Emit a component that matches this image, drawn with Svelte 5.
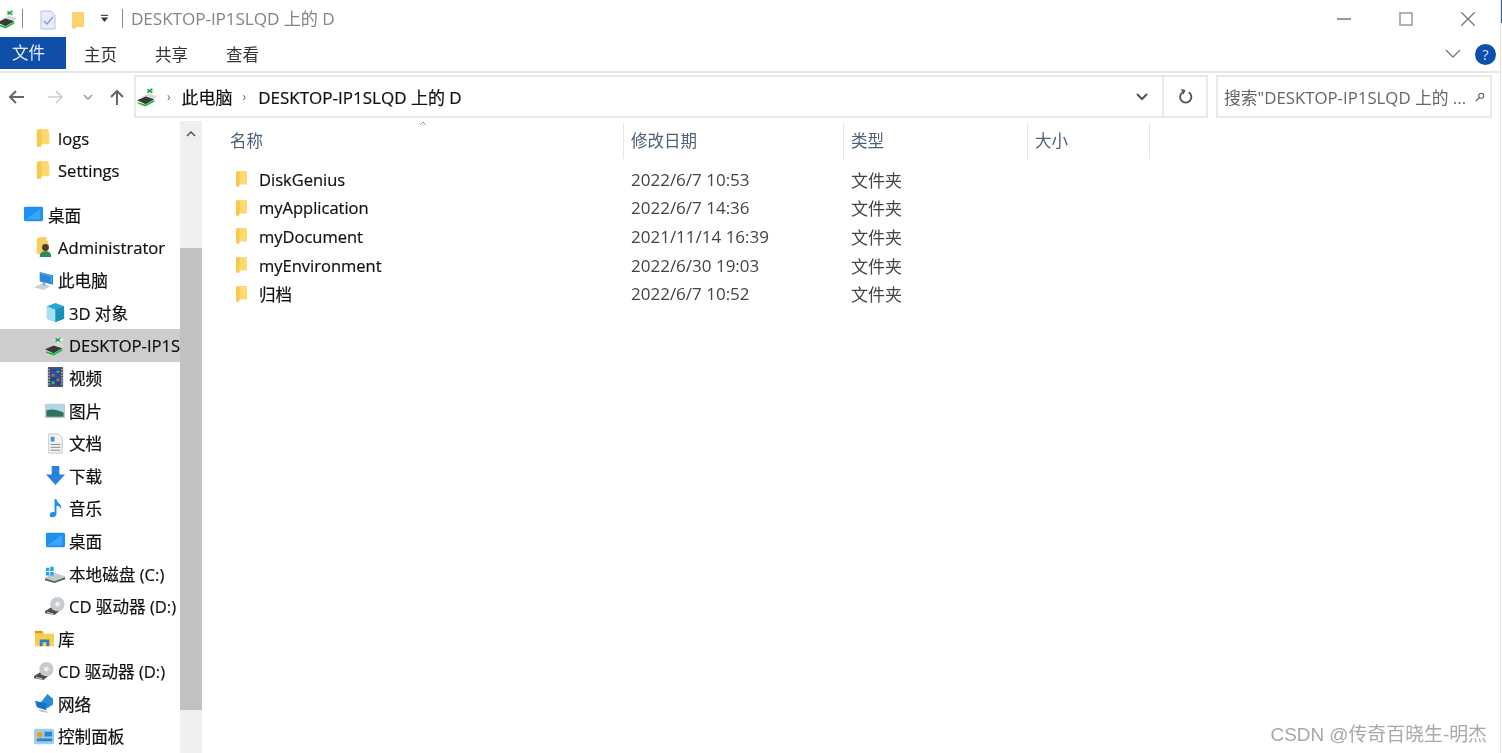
<script>
	const tree = [
		{ name: 'logs', icon: 'folder', level: 1 },
		{ name: 'Settings', icon: 'folder', level: 1, gap: true },
		{ name: '桌面', icon: 'desktop', level: 0 },
		{ name: 'Administrator', icon: 'user', level: 1 },
		{ name: '此电脑', icon: 'pc', level: 1 },
		{ name: '3D 对象', icon: 'cube', level: 2 },
		{ name: 'DESKTOP-IP1SLQD 上的 D', icon: 'net', level: 2, active: true },
		{ name: '视频', icon: 'video', level: 2 },
		{ name: '图片', icon: 'image', level: 2 },
		{ name: '文档', icon: 'doc', level: 2 },
		{ name: '下载', icon: 'down', level: 2 },
		{ name: '音乐', icon: 'music', level: 2 },
		{ name: '桌面', icon: 'desktop', level: 2 },
		{ name: '本地磁盘 (C:)', icon: 'disk', level: 2 },
		{ name: 'CD 驱动器 (D:)', icon: 'cd', level: 2 },
		{ name: '库', icon: 'lib', level: 1 },
		{ name: 'CD 驱动器 (D:)', icon: 'cd', level: 1 },
		{ name: '网络', icon: 'network', level: 1 },
		{ name: '控制面板', icon: 'panel', level: 1 }
	];

	const files = [
		{ name: 'DiskGenius', date: '2022/6/7 10:53' },
		{ name: 'myApplication', date: '2022/6/7 14:36' },
		{ name: 'myDocument', date: '2021/11/14 16:39' },
		{ name: 'myEnvironment', date: '2022/6/30 19:03' },
		{ name: '归档', date: '2022/6/7 10:52' }
	];
</script>

{#snippet icon(kind)}
	<svg class="icon" viewBox="0 0 22 22" aria-hidden="true">
		{#if kind === 'folder'}
			<path d="M3 2l5-1h7v3h1v13H8l-1 3-4-1z" fill="#fdd96f" />
			<path d="M3 2l5-1v16l-1 3-4-1z" fill="#f7c94f" />
		{:else if kind === 'desktop'}
			<rect x="1" y="3" width="20" height="15" rx="1.500" fill="#1e90f0" />
			<path d="M3 16L18 5v11z" fill="#3aa6f5" />
		{:else if kind === 'user'}
			<path d="M3 1l5-1h5v4h2v14H3z" fill="#f8cf5a" />
			<circle cx="12" cy="11" r="3.600" fill="#4e3c2e" />
			<path d="M6 21c0-5 3-6 6-6s6 1 6 6z" fill="#2b8a58" />
		{:else if kind === 'pc'}
			<path d="M6 2l14 3.500v10L6 12z" fill="#2a88d8" />
			<path d="M7 3.500l11 3v7" fill="none" stroke="#5cb0ee" />
			<path d="M0 18l9-4 8 3-7 4z" fill="#c9ced3" />
			<path d="M10 13l1 3" stroke="#8d9499" stroke-width="2" />
		{:else if kind === 'cube'}
			<path d="M11 1l9 3.500v13l-9 3.500-9-3.500v-13z" fill="#25a7cf" />
			<path d="M2 4.500L11 8v13l-9-3.500z" fill="#a2e2ee" />
			<path d="M11 8l9-3.500v13L11 21z" fill="#1a8fb8" />
		{:else if kind === 'net'}
			<path d="M5 11l8-3 8 3-8 5z" fill="#d9d9d9" />
			<path d="M0 15l9-4 9 3-9 5z" fill="#3a3a3a" />
			<path d="M1 17l8 2.500 9-5v2l-9 5-8-3z" fill="#1fbb48" />
			<path d="M9 5l6-3 5 3-6 4z" fill="#eeeeee" />
			<path d="M11 7l5-4M11 3.500L16 7" stroke="#1fa843" stroke-width="1.700" />
		{:else if kind === 'video'}
			<rect x="3" y="0" width="16" height="21" rx="1" fill="#4d5560" />
			<path d="M4.200 2v18M17.800 2v18" stroke="#c7ccd0" stroke-width="1.200" stroke-dasharray="1.500 1.500" />
			<rect x="6" y="2" width="10" height="8" fill="#1f4fb0" />
			<rect x="6" y="11" width="10" height="8" fill="#16499e" />
			<path d="M7 7h3v3H7zM12 12h3v3h-3z" fill="#d8602a" />
			<path d="M12 4h3v2h-3zM7 15h3v3H7z" fill="#58b04a" />
		{:else if kind === 'image'}
			<rect x="0" y="4" width="21" height="15" fill="#c6ccd2" />
			<rect x="1.500" y="5.500" width="18" height="6" fill="#a8d8f2" />
			<path d="M1.500 11c5-2 10-1 18 2v4.500h-18z" fill="#33715f" />
		{:else if kind === 'doc'}
			<path d="M4 1h10l4 4v16H4z" fill="#f2f3f4" stroke="#bfc3c7" />
			<path d="M6 4h4v5H6z" fill="#3e97dc" />
			<path d="M6 12h10M6 15h10M6 18h10" stroke="#7d868d" />
		{:else if kind === 'down'}
			<path d="M7 1h8v9h6L11 21 1 10h6z" fill="#2b82dc" />
		{:else if kind === 'music'}
			<path d="M10 1h2c0 4 6 5 5 11-1-3-3-4-5-4v9c0 3-7 5-7 1 0-3 3-4 5-3z" fill="#1f8fe8" />
		{:else if kind === 'disk'}
			<path d="M0 16l8-6 13 4v3l-11 4-10-3z" fill="#c4c9cc" />
			<path d="M0 16l10 3 11-4v2l-11 4-10-3z" fill="#5e6367" />
			<path d="M1 5h3.500v3.500H1zM5.500 4H9v4.500H5.500zM1 9.500h3.500V13H1zM5.500 9.500H9V13H5.500z" fill="#19a3e8" />
		{:else if kind === 'cd'}
			<path d="M0 16l6-4 11 2-7 6-10-2z" fill="#4a4e51" />
			<path d="M2 17l7 2" stroke="#e2e2e2" />
			<circle cx="13" cy="8.500" r="7.500" fill="#c6cbcf" />
			<circle cx="13" cy="8.500" r="2.500" fill="#eef0f1" />
		{:else if kind === 'lib'}
			<path d="M1 4h8l2 2h10v13H1z" fill="#f9ce4e" />
			<path d="M1 3h8v2.500H1z" fill="#d9962a" />
			<path d="M6 19v-7h10v7h-3v-4h-4v4z" fill="#2c7fd0" />
		{:else if kind === 'network'}
			<path d="M14 1l6 5v6l-6 4-7-6z" fill="#2b8ad6" />
			<path d="M1 8l12 3v7L3 15z" fill="#1573c6" />
			<path d="M5 17l8 2 2 2-9-2z" fill="#b9bec2" />
		{:else if kind === 'panel'}
			<rect x="0" y="3" width="21" height="16" rx="2" fill="#9fcdec" />
			<circle cx="6" cy="9" r="3" fill="#e9a21f" />
			<rect x="11" y="6" width="8" height="5" fill="#2a86d0" />
			<rect x="3" y="13" width="16" height="3" fill="#2a86d0" />
		{/if}
	</svg>
{/snippet}

<div class="window">
	<header class="titlebar">
		<span class="qa-drive">{@render icon('net')}</span>
		<i class="vbar"></i>
		<svg class="qa-doc" viewBox="0 0 16 20" aria-hidden="true">
			<path d="M1 1h10l4 4v14H1z" fill="#e6edf8" stroke="#b4c3dc" />
			<path d="M4 11l3 3 6-7" fill="none" stroke="#7b9fd0" stroke-width="1.300" />
		</svg>
		<svg class="qa-folder" viewBox="0 0 14 20" aria-hidden="true">
			<path d="M1 2h12v15H5l-1 2-3-1z" fill="#fcd36a" />
		</svg>
		<svg class="qa-drop" viewBox="0 0 10 10" aria-hidden="true">
			<path d="M1 1.500h8" stroke="#333" stroke-width="1.200" />
			<path d="M1 4h8L5 9z" fill="#333" />
		</svg>
		<i class="vbar second"></i>
		<span class="title">DESKTOP-IP1SLQD 上的 D</span>
		<div class="winbtns">
			<svg viewBox="0 0 14 14" aria-hidden="true"><path d="M0 7h14" stroke="#777" stroke-width="1.500" /></svg>
			<svg viewBox="0 0 14 14" aria-hidden="true"><rect x="1" y="1" width="12" height="12" fill="none" stroke="#999" stroke-width="1.500" /></svg>
			<svg viewBox="0 0 14 14" aria-hidden="true"><path d="M0 0l14 14M14 0L0 14" stroke="#777" stroke-width="1.300" /></svg>
		</div>
	</header>

	<nav class="ribbon">
		<span class="tab file">文件</span>
		<span class="tab">主页</span>
		<span class="tab">共享</span>
		<span class="tab">查看</span>
		<svg class="collapse" viewBox="0 0 16 10" aria-hidden="true"><path d="M1 1l7 7 7-7" fill="none" stroke="#777" stroke-width="1.300" /></svg>
		<span class="help">?</span>
	</nav>

	<div class="addressrow">
		<div class="navbtns">
			<svg class="arrow" viewBox="0 0 16 14" aria-hidden="true"><path d="M16 7H2M8 1L2 7l6 6" fill="none" stroke="#666" stroke-width="2" /></svg>
			<svg class="arrow fwd" viewBox="0 0 16 14" aria-hidden="true"><path d="M0 7h14M8 1l6 6-6 6" fill="none" stroke="#ccc" stroke-width="1.500" /></svg>
			<svg class="recent" viewBox="0 0 10 6" aria-hidden="true"><path d="M1 1l4 4 4-4" fill="none" stroke="#999" stroke-width="1.500" /></svg>
			<svg class="up" viewBox="0 0 14 16" aria-hidden="true"><path d="M7 16V2M1 8l6-6 6 6" fill="none" stroke="#666" stroke-width="2" /></svg>
		</div>
		<div class="address">
			<span class="addr-icon">{@render icon('net')}</span>
			<span class="crumb-sep">›</span>
			<span class="crumb">此电脑</span>
			<span class="crumb-sep second">›</span>
			<span class="crumb">DESKTOP-IP1SLQD 上的 D</span>
			<svg class="addr-drop" viewBox="0 0 12 8" aria-hidden="true"><path d="M1 1l5 5 5-5" fill="none" stroke="#555" stroke-width="2" /></svg>
			<span class="refresh">
				<svg viewBox="0 0 16 16" aria-hidden="true">
					<path d="M5 3.500a6 6 0 1 0 6.500 0" fill="none" stroke="#555" stroke-width="2" />
					<path d="M3 0l5 1-2 5z" fill="#555" />
				</svg>
			</span>
		</div>
		<div class="search">
			<span>搜索"DESKTOP-IP1SLQD 上的 ...</span>
			<svg viewBox="0 0 12 12" aria-hidden="true">
				<circle cx="7.500" cy="4.500" r="3" fill="none" stroke="#555" stroke-width="1.300" />
				<path d="M5 7l-4 4" stroke="#555" stroke-width="1.500" />
			</svg>
		</div>
	</div>

	<div class="body">
		<aside class="sidebar">
			<ul class="tree">
				{#each tree as item}
					<li class="node level{item.level}" class:active={item.active} class:gap={item.gap}>
						{@render icon(item.icon)}
						<span class="label">{item.name}</span>
					</li>
				{/each}
			</ul>
			<div class="scrollbar">
				<div class="scroll-up">
					<svg viewBox="0 0 10 6" aria-hidden="true"><path d="M1 5l4-4 4 4" fill="none" stroke="#555" stroke-width="1.500" /></svg>
				</div>
				<div class="thumb"></div>
			</div>
		</aside>

		<main class="list">
			<svg class="sort" viewBox="0 0 8 5" aria-hidden="true"><path d="M1 4l3-3 3 3" fill="none" stroke="#999" /></svg>
			<div class="head">
				<span>名称</span>
				<span>修改日期</span>
				<span>类型</span>
				<span>大小</span>
			</div>
			{#each files as file}
				<div class="row">
					<span class="fname">
						<svg viewBox="0 0 14 20" aria-hidden="true">
							<path d="M1 2l4-1h8v15H5l-1 3-3-1z" fill="#fdd96f" />
							<path d="M1 2l4-1v15l-1 3-3-1z" fill="#f7c94f" />
						</svg>
						{file.name}
					</span>
					<span class="meta">{file.date}</span>
					<span class="meta">文件夹</span>
				</div>
			{/each}
		</main>
	</div>

	<div class="watermark">CSDN @传奇百晓生-明杰</div>
	<div class="edge"></div>
</div>

<style>
	:global(body) {
		background: #fff;
		overflow: hidden;
	}
	.window {
		position: relative;
		width: 1502px;
		height: 753px;
		overflow: hidden;
		background: #fff;
		font-family: 'Open Sans', 'Noto Sans CJK SC', sans-serif;
		font-size: 16.600px;
		color: #111;
		filter: blur(0.55px);
		display: flex;
		flex-direction: column;
	}
	i {
		display: block;
	}
	.titlebar {
		height: 37px;
		flex: none;
		display: flex;
		align-items: center;
	}
	.qa-drive {
		display: flex;
		margin-left: -3px;
	}
	.vbar {
		width: 1px;
		height: 19px;
		background: #888;
		margin-left: 4px;
	}
	.qa-doc {
		width: 16px;
		height: 20px;
		margin-left: 17px;
		margin-top: 2px;
	}
	.qa-folder {
		width: 14px;
		height: 20px;
		margin-left: 15px;
		margin-top: 2px;
	}
	.qa-drop {
		width: 9px;
		height: 9px;
		margin-left: 15px;
	}
	.vbar.second {
		margin-left: 13px;
	}
	.title {
		margin-left: 8px;
		color: #858585;
		font-size: 17.200px;
		letter-spacing: -0.1px;
		margin-bottom: 3px;
	}
	.winbtns {
		margin-left: auto;
		margin-right: 27px;
		display: flex;
		gap: 48px;
	}
	.winbtns svg {
		width: 14px;
		height: 14px;
	}
	.ribbon {
		height: 32px;
		flex: none;
		display: flex;
		align-items: center;
	}
	.tab {
		width: 71px;
		padding-left: 18px;
		box-sizing: border-box;
		color: #333;
		font-size: 16.500px;
		padding-top: 2px;
	}
	.tab.file {
		width: 66px;
		height: 32px;
		line-height: 32px;
		padding: 0 0 0 12px;
		background: #0f4fa8;
		color: #e4ecf7;
	}
	.collapse {
		width: 16px;
		height: 10px;
		margin-left: auto;
		margin-top: 2px;
	}
	.help {
		width: 21px;
		height: 21px;
		border-radius: 50%;
		background: #0d4fae;
		color: #dbe6f5;
		font-size: 15px;
		line-height: 21px;
		text-align: center;
		margin: 2px 6px 0 14px;
	}
	.addressrow {
		flex: none;
		height: 50px;
		box-sizing: border-box;
		border-top: 2px solid #e8e8e8;
		margin-top: 2px;
		padding: 2px 10px 3px 8px;
		display: flex;
		align-items: stretch;
	}
	.navbtns {
		width: 126px;
		display: flex;
		align-items: center;
	}
	.arrow {
		width: 16px;
		height: 14px;
	}
	.arrow.fwd {
		margin-left: 24px;
	}
	.recent {
		width: 10px;
		height: 6px;
		margin-left: 19px;
	}
	.up {
		width: 14px;
		height: 16px;
		margin-left: 17px;
	}
	.address {
		flex: none;
		width: 1074px;
		box-sizing: border-box;
		border: 2px solid #e8e8e8;
		display: flex;
		align-items: center;
		padding-left: 1px;
		font-size: 17px;
	}
	.addr-icon {
		display: flex;
	}
	.crumb {
		-webkit-text-stroke: 0.2px currentColor;
	}
	.crumb-sep {
		margin-left: 9px;
		margin-right: 11px;
		color: #666;
		font-size: 12px;
	}
	.crumb-sep.second {
		margin-left: 10px;
		margin-right: 12px;
	}
	.addr-drop {
		width: 12px;
		height: 8px;
		margin-left: auto;
		margin-right: 14px;
	}
	.refresh {
		width: 42px;
		align-self: stretch;
		border-left: 2px solid #e8e8e8;
		display: flex;
		align-items: center;
		justify-content: center;
	}
	.refresh svg {
		width: 15px;
		height: 15px;
	}
	.search {
		flex: none;
		width: 276px;
		margin-left: 8px;
		box-sizing: border-box;
		border: 2px solid #e8e8e8;
		display: flex;
		align-items: center;
		justify-content: space-between;
		padding: 0 5px 0 6px;
		color: #666;
		white-space: nowrap;
		font-size: 16.800px;
	}
	.search svg {
		width: 10px;
		height: 10px;
	}
	.body {
		flex: 1;
		min-height: 0;
		display: flex;
	}
	.sidebar {
		flex: none;
		width: 202px;
		display: flex;
	}
	.tree {
		list-style: none;
		margin: 0;
		padding: 1px 0 0;
		width: 180px;
		flex: none;
		overflow: hidden;
		-webkit-text-stroke: 0.2px currentColor;
	}
	.node {
		height: 32.600px;
		display: flex;
		align-items: center;
		white-space: nowrap;
		overflow: hidden;
	}
	.node.gap {
		margin-bottom: 11.500px;
	}
	.node.active {
		background: #cdcdcd;
	}
	.level0 {
		padding-left: 23px;
	}
	.level0 .icon {
		margin-right: 4px;
	}
	.level1 {
		padding-left: 34px;
	}
	.level1 .icon {
		margin-right: 3px;
	}
	.level2 {
		padding-left: 45px;
	}
	.level2 .icon {
		margin-right: 3px;
	}
	.icon {
		width: 21px;
		height: 21px;
		flex: none;
	}
	.scrollbar {
		width: 22px;
		flex: none;
		background: #efefef;
		display: flex;
		flex-direction: column;
		overflow: hidden;
	}
	.scroll-up {
		height: 127px;
		flex: none;
		display: flex;
		justify-content: center;
		padding-top: 10px;
		box-sizing: border-box;
	}
	.scroll-up svg {
		width: 10px;
		height: 6px;
	}
	.thumb {
		height: 462px;
		flex: none;
		background: #c1c1c1;
	}
	.list {
		position: relative;
		flex: 1;
		min-width: 0;
	}
	.sort {
		position: absolute;
		left: 217px;
		top: 0;
		width: 8px;
		height: 5px;
	}
	.head {
		display: grid;
		grid-template-columns: 422px 220px 184px 122px;
		height: 36px;
		margin-top: 2px;
	}
	.head span {
		padding-left: 7px;
		border-right: 1px solid #e5e5e5;
		color: #4c607a;
		line-height: 36px;
		font-size: 16.500px;
	}
	.head span:first-child {
		padding-left: 28px;
	}
	.row {
		display: grid;
		grid-template-columns: 422px 220px 184px;
		height: 28.600px;
		align-items: center;
	}
	.head + .row {
		margin-top: 6px;
	}
	.fname {
		display: flex;
		align-items: center;
		padding-left: 33px;
		font-size: 16.500px;
		-webkit-text-stroke: 0.2px currentColor;
	}
	.fname svg {
		width: 13px;
		height: 18px;
		margin-right: 11px;
	}
	.meta {
		padding-left: 7px;
		color: #444;
		font-size: 17px;
	}
	.watermark {
		position: absolute;
		right: 15px;
		bottom: 7px;
		color: #a8a8a8;
		font-family: 'Liberation Sans', 'Noto Sans CJK SC', sans-serif;
		font-size: 18.900px;
	}
	.edge {
		position: absolute;
		right: 0;
		top: 0;
		bottom: 0;
		width: 2px;
		border-left: 1px solid #e6e6e6;
		background: linear-gradient(#2a5fb0 0 23px, #fff 23px);
		box-sizing: border-box;
	}
</style>
